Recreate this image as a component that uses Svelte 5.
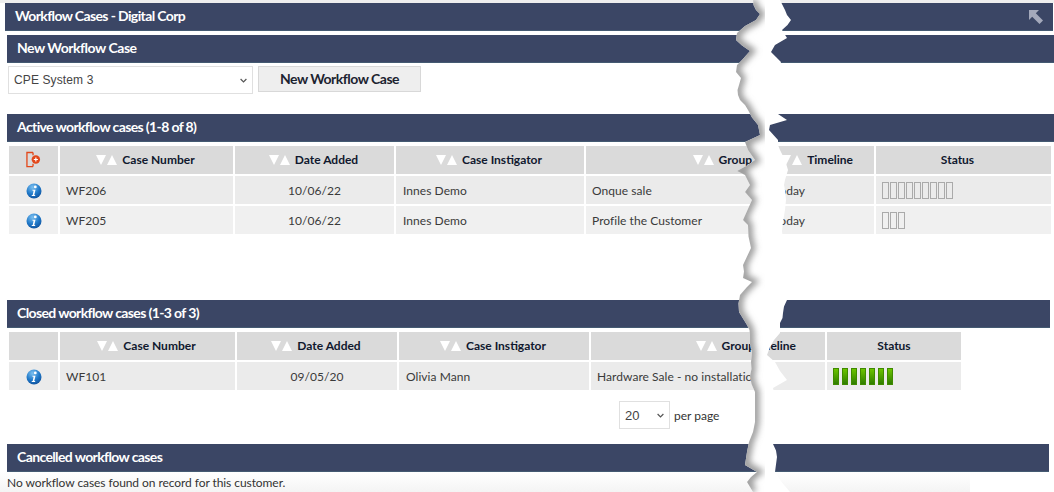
<script>
  const active = [
    { id: 'WF206', date: '10/06/22', who: 'Innes Demo', group: 'Onque sale', time: 'today', boxes: 9 },
    { id: 'WF205', date: '10/06/22', who: 'Innes Demo', group: 'Profile the Customer', time: 'today', boxes: 3 }
  ];
  const left = [[753,0],[756,10],[760,14],[756,20],[745,26],[737,33],[736,40],[750,51],[742,60],[737,65],[736,72],[741,78],[739,85],[738,95],[740,100],[748,110],[758,125],[760,135],[745,142],[748,150],[755,160],[737,171],[745,175],[750,185],[745,192],[752,200],[743,220],[748,225],[751,248],[743,265],[743,278],[752,282],[747,287],[740,295],[739,312],[747,325],[750,335],[752,352],[751,362],[750,376],[755,392],[755,412],[753,432],[747,452],[745,465],[757,472],[747,482],[753,492]];
  const right = [[790,492],[775,472],[777,457],[773,444],[776,400],[773,388],[787,380],[775,362],[767,355],[770,347],[780,333],[780,323],[783,313],[787,300],[783,270],[783,240],[783,222],[785,210],[785,190],[785,180],[788,170],[780,150],[778,140],[769,130],[770,125],[787,120],[778,114],[775,90],[781,62],[771,52],[775,45],[787,38],[782,30],[791,20],[785,10],[780,0]];
  function jag(a) {
    const out = [];
    a.forEach((p, i) => {
      out.push(p);
      const q = a[i + 1];
      if (q && Math.abs(q[1] - p[1]) > 8) {
        out.push([(p[0] + q[0]) / 2 + ((i * 7) % 3) - 1, (p[1] + q[1]) / 2]);
      }
    });
    return out;
  }
  const pts = (a) => a.map((p) => p.join(',')).join(' ');
  const leftEdge = jag(left);
  const rightEdge = jag(right);
</script>

{#snippet sort()}
  <svg class="sort" width="21" height="10" viewBox="0 0 21 10"><path d="M0 0h10L5 10zM11 10h10L16 0z" fill="#fff"/></svg>
{/snippet}

{#snippet info()}
  <svg width="16" height="16" viewBox="0 0 16 16">
    <defs><radialGradient id="ib" cx="0.4" cy="0.25" r="0.85"><stop offset="0" stop-color="#7cc0f0"/><stop offset="0.55" stop-color="#1f78c8"/><stop offset="1" stop-color="#0d4a94"/></radialGradient></defs>
    <circle cx="8" cy="8" r="7.5" fill="url(#ib)"/>
    <circle cx="9.3" cy="3.9" r="1.4" fill="#fff"/>
    <path d="M6.3 6.7h3.2l-1.2 5.2h1l-.3 1H5.6l.3-1h.8l.9-4.200h-1z" fill="#fff"/>
  </svg>
{/snippet}

{#snippet chevron()}
  <svg class="chev" width="7" height="5" viewBox="0 0 7 5"><path d="M.6 1l2.900 2.900L6.400 1" fill="none" stroke="#555" stroke-width="1.200"/></svg>
{/snippet}

<div class="page">
  <div class="strip"></div>
  <h1 class="bar top">Workflow Cases - Digital Corp
    <svg width="14" height="14" viewBox="0 0 14 14"><path d="M0 0h10L6.800 3.200 14 10.500 10.500 14 3.200 6.800 0 10z" fill="#a4a9bb"/></svg>
  </h1>
  <h2 class="bar tight">New Workflow Case</h2>
  <div class="newcase">
    <span class="selwrap"><select class="sys"><option>CPE System 3</option></select>{@render chevron()}</span>
    <button>New Workflow Case</button>
  </div>

  <h2 class="bar gap">Active workflow cases (1-8 of 8)</h2>
  <div class="table act">
    <div class="th"><svg width="15" height="17" viewBox="0 0 16 17"><path d="M7.500 1H1v15h6.500" fill="none" stroke="#e2471a" stroke-width="1.400"/><path d="M7.500 1v3M7.500 13v3" stroke="#e2471a" stroke-width="1.400"/><circle cx="10.500" cy="8.500" r="4.500" fill="#e2471a"/><path d="M8.300 8.500h4.400M10.500 6.300v4.400" stroke="#fff" stroke-width="1.300"/></svg></div>
    <div class="th"><span class="shift">{@render sort()}Case Number</span></div>
    <div class="th"><span class="shift">{@render sort()}Date Added</span></div>
    <div class="th"><span class="shift">{@render sort()}Case Instigator</span></div>
    <div class="th end a-group">{@render sort()}Group</div>
    <div class="th end a-time">{@render sort()}Timeline</div>
    <div class="th a-status">Status</div>
    {#each active as r, i}
      <div class="td c" class:alt={i === 1}>{@render info()}</div>
      <div class="td idc" class:alt={i === 1}>{r.id}</div>
      <div class="td c" class:alt={i === 1}>{r.date}</div>
      <div class="td" class:alt={i === 1}>{r.who}</div>
      <div class="td idc" class:alt={i === 1}>{r.group}</div>
      <div class="td a-today" class:alt={i === 1}>{r.time}</div>
      <div class="td boxes" class:alt={i === 1}>
        {#each Array(r.boxes) as _}<span class="box"></span>{/each}
      </div>
    {/each}
  </div>

  <h2 class="bar closed">Closed workflow cases (1-3 of 3)</h2>
  <div class="table clo">
    <div class="th"></div>
    <div class="th"><span class="shift">{@render sort()}Case Number</span></div>
    <div class="th"><span class="shift">{@render sort()}Date Added</span></div>
    <div class="th"><span class="shift">{@render sort()}Case Instigator</span></div>
    <div class="th end c-group">{@render sort()}Group</div>
    <div class="th end c-time"><span>Timeline</span></div>
    <div class="th">Status</div>
    <div class="td c">{@render info()}</div>
    <div class="td idc">WF101</div>
    <div class="td c">09/05/20</div>
    <div class="td">Olivia Mann</div>
    <div class="td idc">Hardware Sale - no installation</div>
    <div class="td"></div>
    <div class="td bars">
      {#each Array(7) as _}<span class="gbar"></span>{/each}
    </div>
  </div>

  <div class="pager">
    <span class="selwrap"><select class="per"><option>20</option></select>{@render chevron()}</span>
    <span>per page</span>
  </div>

  <h2 class="bar cancelled">Cancelled workflow cases</h2>
  <p class="none">No workflow cases found on record for this customer.</p>

  <svg class="tear" width="1054" height="492" viewBox="0 0 1054 492">
    <defs>
      <clipPath id="tc"><polygon points={pts([...leftEdge, ...rightEdge])}/></clipPath>
      <filter id="tb" x="-20%" y="-5%" width="140%" height="110%"><feGaussianBlur stdDeviation="3"/></filter>
    </defs>
    <g clip-path="url(#tc)">
      <rect width="1054" height="492" fill="#fff"/>
      <polyline points={pts(leftEdge)} fill="none" stroke="#9c9c9c" stroke-width="9" filter="url(#tb)"/>
    </g>
  </svg>
</div>

<style>
  :global(body) { margin: 0; background: #fff; }
  .page {
    position: relative;
    width: 1054px;
    height: 492px;
    overflow: hidden;
    font-family: Lato, "Liberation Sans", sans-serif;
    font-size: 12px;
    color: #333;
  }
  .strip { height: 3px; background: #eeeeee; }
  .bar {
    display: flex;
    align-items: center;
    justify-content: space-between;
    box-sizing: border-box;
    height: 28px;
    margin: 0 0 0 7px;
    padding: 0 0 3px 10px;
    background: #3b4665;
    border-bottom: 1px solid #445a72;
    color: #fff;
    font-size: 14px;
    font-weight: 700;
    letter-spacing: -0.62px;
  }
  .tight { letter-spacing: -0.47px; }
  .top { margin-left: 5px; margin-right: 1px; }
  .top svg { margin: 4px 10px 0 0; }
  h2.bar { margin-top: 4px; }
  .newcase { display: flex; align-items: flex-start; gap: 5px; margin: 3px 0 0 8px; }
  .selwrap { position: relative; display: block; }
  .chev { position: absolute; right: 6px; top: 12px; pointer-events: none; }
  select {
    appearance: none;
    display: block;
    box-sizing: border-box;
    border: 1px solid #e0e0e0;
    background: #fff;
    color: #444;
    font-family: "Liberation Sans", sans-serif;
    font-size: 12px;
    letter-spacing: 0.12px;
    border-radius: 0;
    outline: none;
  }
  .sys { width: 245px; height: 28px; padding-left: 5px; }
  button {
    box-sizing: border-box;
    width: 163px;
    height: 26px;
    border: 1px solid #d8d8d8;
    background: #eeeeee;
    color: #1c2330;
    font-family: Lato, sans-serif;
    font-size: 14px;
    font-weight: 700;
    letter-spacing: -0.5px;
    padding: 0 0 2px;
  }
  h2.gap { margin-top: 20px; }
  .table { display: grid; gap: 2px; margin: 4px 0 0 9px; grid-auto-rows: 28px; }
  .act { width: 1042px; height: 88px; grid-template-columns: 49px 173px 159px 188px 179px 107px 175px; }
  .clo { width: 952px; height: 58px; grid-template-columns: 49px 175px 160px 190px 174px 58px 134px; }
  .th {
    display: flex;
    align-items: center;
    justify-content: center;
    background: #dadada;
    color: #10182e;
    font-weight: 700;
    font-size: 12px;
    overflow: hidden;
    white-space: nowrap;
    padding-bottom: 1px;
  }
  .shift { display: flex; align-items: center; margin-left: -2px; }
  .sort { margin-right: 5px; flex: none; }
  .end { justify-content: flex-end; }
  .a-group { padding-right: 13px; }
  .a-time { padding-right: 21px; }
  .a-status { padding-right: 12px; }
  .c-group { padding-right: 10px; }
  .c-time { padding-right: 29px; }
  .td {
    display: flex;
    align-items: center;
    background: #ebebeb;
    padding: 1px 0 0 7px;
    white-space: nowrap;
    overflow: hidden;
    color: #3a3a3a;
    letter-spacing: 0.05px;
  }
  .td.alt { background: #f0f0f0; }
  .td.c { justify-content: center; padding-left: 0; }
  .td.idc { padding-left: 6px; }
  .a-today { padding-left: 8px; }
  .boxes { gap: 1px; padding: 0 0 0 6px; }
  .box { box-sizing: border-box; width: 7px; height: 17px; border: 1px solid #aaaaaa; }
  .bars { gap: 3px; padding: 0 0 0 6px; }
  .gbar {
    box-sizing: border-box;
    width: 6px;
    height: 17px;
    border: 1px solid #3f8a00;
    background: linear-gradient(#6cc400, #2f7d00);
  }
  h2.closed { margin-top: 66px; margin-right: 4px; }
  .pager { display: flex; align-items: center; gap: 4px; margin: 11px 0 0 619px; height: 28px; }
  .per { width: 51px; height: 28px; padding-left: 5px; font-size: 13px; }
  h2.cancelled { margin-top: 15px; margin-right: 5px; }
  .none {
    margin: 0;
    width: 970px;
    height: 20px;
    box-sizing: border-box;
    padding: 3px 0 0 7px;
    background: linear-gradient(#ffffff, #f4f4f4);
    color: #333;
    letter-spacing: -0.07px;
  }
  .tear { position: absolute; left: 0; top: 0; pointer-events: none; }
</style>
